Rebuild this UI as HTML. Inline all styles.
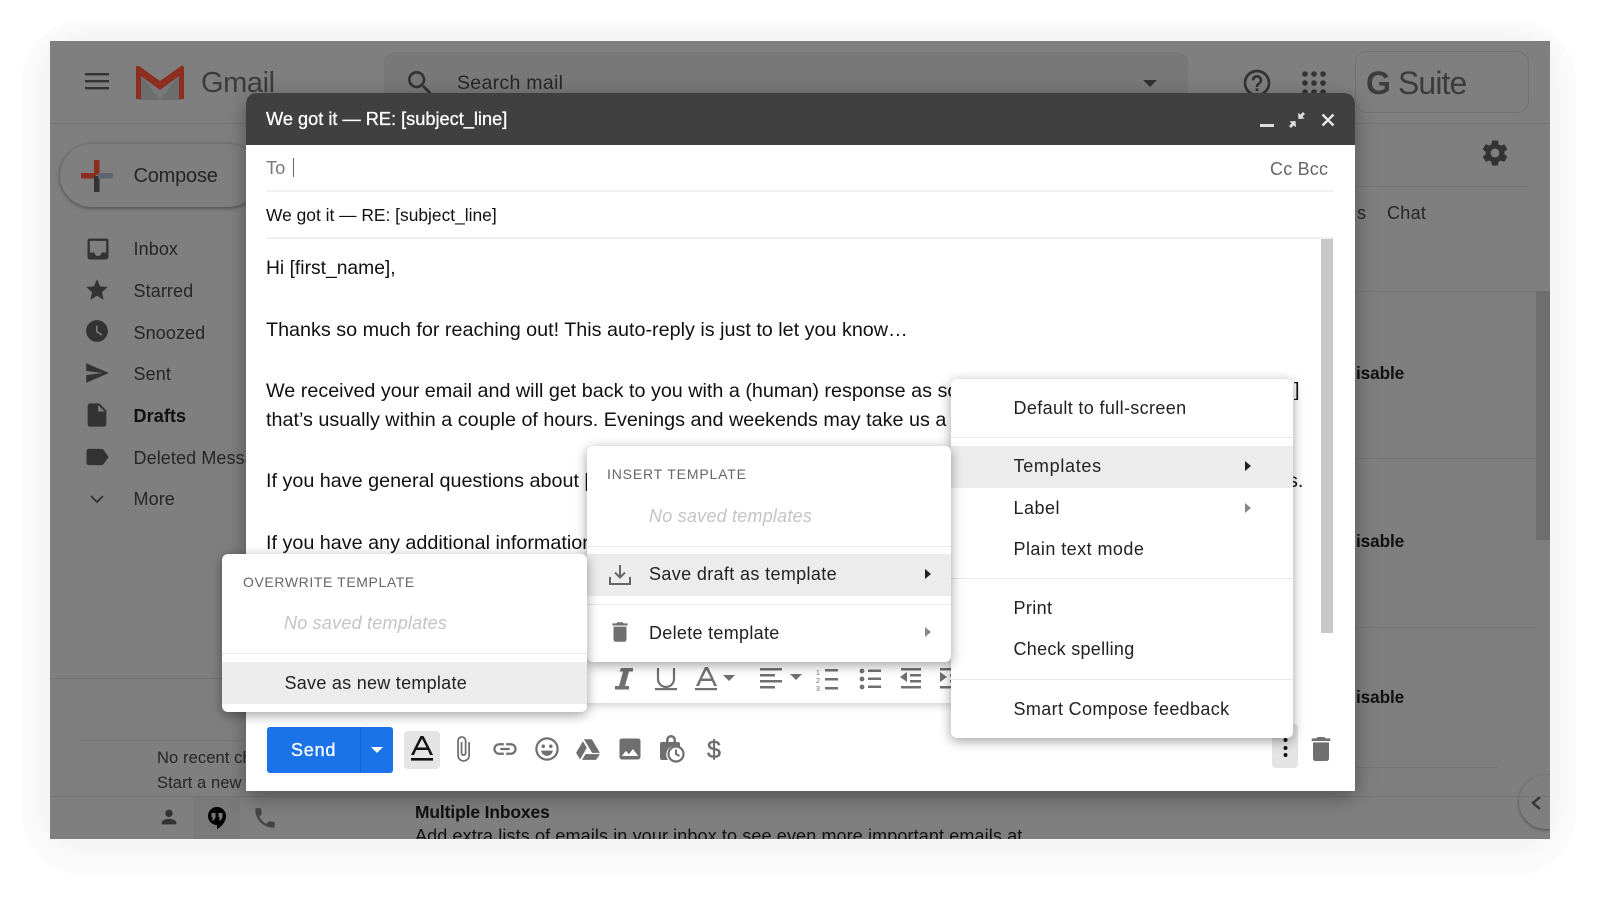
<!DOCTYPE html>
<html><head><meta charset="utf-8"><style>
html,body{margin:0;padding:0;width:1600px;height:897px;overflow:hidden;background:#fff}
body{position:relative;font-family:"Liberation Sans",Arial,sans-serif}
.a,.t,svg{position:absolute}
.t{white-space:nowrap;line-height:22px;margin-top:-11px}
#halo1{left:22px;top:20px;width:1554px;height:855px;border-radius:62px;background:#fbfbfb}
#halo2{left:36px;top:30px;width:1526px;height:824px;border-radius:50px;background:#f5f5f5;filter:blur(4px)}
#bg{left:50px;top:41px;width:1500px;height:798px;background:#7f7f7f;overflow:hidden}
#bg>*{position:absolute}
#bg .t{color:#262626;font-size:18px;letter-spacing:.1px}
.ln{background:#747474;height:1px}
#win{left:246px;top:93px;width:1109px;height:698px;background:#fff;border-radius:10px 10px 0 0;box-shadow:0 6px 20px rgba(0,0,0,.35)}
#hdr{position:absolute;left:0;top:0;width:100%;height:52px;background:#404040;border-radius:10px 10px 0 0}
.b{font-size:19.75px;color:#111;left:20px}
.d{position:absolute;height:2px;background:#f1f1f1}
.menu{position:absolute;background:#fff;border-radius:6px;box-shadow:0 3px 12px rgba(0,0,0,.38)}
.menu .t{font-size:18px;letter-spacing:.36px;color:#222}
.hl{position:absolute;left:0;right:0;background:#ececec}
.dv{position:absolute;left:0;right:0;height:1px;background:#e8e8e8}
.h{font-size:14px!important;color:#666!important}
.ns{font-style:italic;color:#c4c4c4!important;letter-spacing:.22px!important}
.arr{position:absolute;width:0;height:0;border-left:6px solid #222;border-top:5.5px solid transparent;border-bottom:5.5px solid transparent}
.arr.g{border-left-color:#888}
.ic{fill:#6f6f6f}
.bd{font-weight:bold;color:#111!important;letter-spacing:-.1px!important;font-size:17.2px!important}
</style></head><body>
<div class="a" id="halo1"></div><div class="a" id="halo2"></div>
<div class="a" id="bg">
 <div class="ln" style="left:0;top:82px;width:1500px"></div>
 <svg style="left:35px;top:31px" width="24" height="18"><path d="M0 1h24v2.400H0zM0 8h24v2.400H0zM0 15h24v2.400H0z" fill="#333"/></svg>
 <svg style="left:85px;top:24px" width="50" height="36" viewBox="0 0 50 36"><path d="M3 6L25 22 47 6V35H3z" fill="#6d6d6d"/><path d="M3 6L25 22 47 6 25 35z" fill="#7a7a7a" opacity=".8"/><path d="M2 1C1 1 1 2 1 3V34h5V11L25 25 44 11V34h5V3C49 1 48 0 46 1L25 16 4 1z" fill="#8c2f20"/></svg>
 <div class="t" style="left:151px;top:42px;letter-spacing:-.4px;color:#3c3c3c;line-height:34px;margin-top:-17px"><span style="font-size:29px">Gmail</span></div>
 <div style="left:334px;top:11px;width:804px;height:70px;border-radius:11px;background:#787878"></div>
 <svg style="left:354px;top:26px" width="32" height="32" viewBox="0 0 24 24"><path fill="#333" d="M15.500 14h-.79l-.28-.27C15.410 12.590 16 11.110 16 9.500 16 5.910 13.090 3 9.500 3S3 5.910 3 9.500 5.910 16 9.500 16c1.610 0 3.090-.59 4.230-1.570l.27.28v.79l5 4.990L20.490 19l-4.990-5zm-6 0C7.010 14 5 11.990 5 9.500S7.010 5 9.500 5 14 7.010 14 9.500 11.990 14 9.500 14z"/></svg>
 <div class="t" style="left:407px;top:42px;letter-spacing:.3px"><span style="font-size:19.500px">Search mail</span></div>
 <div style="left:1093px;top:39px;width:0;height:0;border-left:7px solid transparent;border-right:7px solid transparent;border-top:7px solid #333"></div>
 <svg style="left:1191px;top:26px" width="32" height="32" viewBox="0 0 24 24"><path fill="#333" d="M11 18h2v-2h-2v2zm1-16C6.480 2 2 6.480 2 12s4.480 10 10 10 10-4.480 10-10S17.520 2 12 2zm0 18c-4.410 0-8-3.590-8-8s3.590-8 8-8 8 3.590 8 8-3.590 8-8 8zm0-14c-2.210 0-4 1.790-4 4h2c0-1.100.9-2 2-2s2 .9 2 2c0 2-3 1.750-3 5h2c0-2.250 3-2.500 3-5 0-2.210-1.790-4-4-4z"/></svg>
 <svg style="left:1252px;top:30px" width="24" height="24" fill="#333"><circle cx="3" cy="3" r="2.800"/><circle cx="12" cy="3" r="2.800"/><circle cx="21" cy="3" r="2.800"/><circle cx="3" cy="12" r="2.800"/><circle cx="12" cy="12" r="2.800"/><circle cx="21" cy="12" r="2.800"/><circle cx="3" cy="21" r="2.800"/><circle cx="12" cy="21" r="2.800"/><circle cx="21" cy="21" r="2.800"/></svg>
 <div style="left:1305px;top:10px;width:174px;height:62px;border:1px solid #727272;border-radius:12px;box-sizing:border-box"></div>
 <div class="t" style="left:1316px;top:42px;line-height:38px;margin-top:-19px;letter-spacing:-.9px;color:#3c3c3c"><span style="font-size:32px;font-weight:bold">G</span><span style="font-size:32px"> Suite</span></div>
 <svg style="left:1430px;top:97px" width="30" height="30" viewBox="0 0 24 24"><path fill="#333" d="M19.430 12.980c.04-.32.07-.64.07-.98s-.03-.66-.07-.98l2.110-1.650c.19-.15.24-.42.12-.64l-2-3.460c-.12-.22-.39-.3-.61-.22l-2.490 1c-.52-.4-1.080-.73-1.690-.98l-.38-2.650C14.460 2.180 14.250 2 14 2h-4c-.25 0-.46.18-.49.42l-.38 2.650c-.61.25-1.170.59-1.690.98l-2.490-1c-.23-.09-.49 0-.61.22l-2 3.460c-.13.22-.07.49.12.64l2.110 1.650c-.04.32-.07.65-.07.98s.03.66.07.98l-2.110 1.650c-.19.15-.24.42-.12.64l2 3.460c.12.22.39.3.61.22l2.490-1c.52.4 1.080.73 1.690.98l.38 2.650c.03.24.24.42.49.42h4c.25 0 .46-.18.49-.42l.38-2.650c.61-.25 1.170-.59 1.690-.98l2.490 1c.23.09.49 0 .61-.22l2-3.460c.12-.22.07-.49-.12-.64l-2.110-1.650zM12 15.500c-1.930 0-3.500-1.570-3.500-3.500s1.570-3.500 3.500-3.500 3.500 1.570 3.500 3.500-1.570 3.500-3.500 3.500z"/></svg>
 <div class="ln" style="left:1305px;top:145px;width:174px"></div>
 <div class="t" style="left:1307px;top:172px">s</div><div class="t" style="left:1337px;top:172px;letter-spacing:.3px">Chat</div>
 <div style="left:1486px;top:250px;width:14px;height:249px;background:#6e6e6e"></div>
 <div class="ln" style="left:1305px;top:250px;width:180px"></div><div class="ln" style="left:1305px;top:417px;width:180px"></div><div class="ln" style="left:1305px;top:586px;width:180px"></div><div class="ln" style="left:1305px;top:726px;width:143px"></div>
 <div class="t bd" style="left:1306px;top:332px">isable</div>
 <div class="t bd" style="left:1306px;top:500px">isable</div>
 <div class="t bd" style="left:1306px;top:656px">isable</div>
 <div style="left:1469px;top:734px;width:54px;height:54px;border-radius:50%;background:#7f7f7f;box-shadow:0 1px 3px rgba(0,0,0,.4)"></div>
 <svg style="left:1480px;top:754px" width="14" height="16" fill="none" stroke="#333" stroke-width="2.400"><path d="M10 2L3 8l7 6"/></svg>
 <div style="left:10px;top:103px;width:200px;height:63px;border-radius:32px;background:#7f7f7f;box-shadow:0 1px 4px rgba(0,0,0,.45)"></div>
 <svg style="left:31px;top:119px" width="32" height="32"><rect x="13" y="0" width="5.500" height="15" fill="#8c2f20"/><rect x="0" y="13" width="15" height="5.500" fill="#8c2f20"/><rect x="13" y="16" width="5.500" height="16" fill="#333"/><rect x="17" y="13" width="15" height="5.500" fill="#5d6670"/></svg>
 <div class="t" style="left:83.500px;top:135px;letter-spacing:-.2px"><span style="font-size:20px">Compose</span></div>
 <svg style="left:34px;top:194px" width="28" height="28" viewBox="0 0 24 24"><path fill="#333" d="M19 3H5c-1.100 0-2 .9-2 2v14c0 1.100.9 2 2 2h14c1.100 0 2-.9 2-2V5c0-1.100-.9-2-2-2zm0 12h-4c0 1.660-1.340 3-3 3s-3-1.340-3-3H5V5h14v10z"/></svg>
 <svg style="left:34px;top:236px" width="26" height="26" viewBox="0 0 24 24"><path fill="#333" d="M12 17.270L18.180 21l-1.640-7.030L22 9.240l-7.190-.61L12 2 9.190 8.630 2 9.240l5.460 4.730L5.820 21z"/></svg>
 <svg style="left:34px;top:277px" width="26" height="26" viewBox="0 0 24 24"><path fill="#333" d="M11.990 2C6.470 2 2 6.480 2 12s4.470 10 9.990 10C17.520 22 22 17.520 22 12S17.520 2 11.990 2zm4.240 14.240L11 13V7h1.500v5.200l4.500 2.700z"/></svg>
 <svg style="left:34px;top:319px" width="26" height="26" viewBox="0 0 24 24"><path fill="#333" d="M2 21l21-9L2 3v7l15 2-15 2z"/></svg>
 <svg style="left:33px;top:360px" width="28" height="28" viewBox="0 0 24 24"><path fill="#333" d="M14 2H6c-1.100 0-2 .9-2 2v16c0 1.100.9 2 2 2h12c1.100 0 2-.9 2-2V8l-6-6zm-1 7V3.500L18.500 9H13z"/></svg>
 <svg style="left:33px;top:402px" width="28" height="28" viewBox="0 0 24 24"><path fill="#333" d="M17.630 5.840C17.270 5.330 16.670 5 16 5L5 5.010C3.900 5.010 3 5.900 3 7v10c0 1.100.9 1.990 2 1.990L16 19c.67 0 1.270-.33 1.630-.84L22 12l-4.370-6.160z"/></svg>
 <svg style="left:40px;top:454px" width="14" height="9" fill="none" stroke="#333" stroke-width="1.800"><path d="M1 1l6 6 6-6"/></svg>
 <div class="t" style="left:83.500px;top:208px">Inbox</div>
 <div class="t" style="left:83.500px;top:250px">Starred</div>
 <div class="t" style="left:83.500px;top:291.500px">Snoozed</div>
 <div class="t" style="left:83.500px;top:333px">Sent</div>
 <div class="t" style="left:83.500px;top:375px;font-weight:bold;color:#111">Drafts</div>
 <div class="t" style="left:83.500px;top:416.500px">Deleted Messages</div>
 <div class="t" style="left:83.500px;top:458px">More</div>
 <div class="ln" style="left:0;top:637px;width:200px"></div>
 <div class="ln" style="left:30px;top:699px;width:180px"></div>
 <div class="ln" style="left:0;top:755px;width:1500px"></div>
 <div class="t" style="left:107px;top:715.500px"><span style="font-size:16.500px">No recent chats</span></div>
 <div class="t" style="left:107px;top:741px"><span style="font-size:16.500px">Start a new one</span></div>
 <div style="left:143px;top:756px;width:47px;height:42px;background:#7a7a7a"></div>
 <svg style="left:108px;top:765px" width="22" height="22" viewBox="0 0 24 24"><path fill="#333" d="M12 12c2.210 0 4-1.790 4-4s-1.790-4-4-4-4 1.790-4 4 1.790 4 4 4zm0 2c-2.670 0-8 1.340-8 4v2h16v-2c0-2.660-5.330-4-8-4z"/></svg>
 <svg style="left:155px;top:764px" width="24" height="26" viewBox="0 0 24 26"><path fill="#000" d="M12 2a9 9 0 0 0-9 9c0 5 4 9 9 9v4c4-2 9-7 9-13a9 9 0 0 0-9-9z"/><path fill="#7a7a7a" d="M6.500 8h4v4.500l-2 3H7l1-3H6.500zM13.500 8h4v4.500l-2 3H14l1-3h-1.500z"/></svg>
 <svg style="left:202px;top:764px" width="26" height="26" viewBox="0 0 24 24"><path fill="#444" d="M6.620 10.790c1.440 2.830 3.760 5.140 6.590 6.590l2.200-2.200c.27-.27.67-.36 1.020-.24 1.120.37 2.330.57 3.570.57.55 0 1 .45 1 1V20c0 .55-.45 1-1 1-9.390 0-17-7.610-17-17 0-.55.45-1 1-1h3.500c.55 0 1 .45 1 1 0 1.250.2 2.450.57 3.570.11.35.03.74-.25 1.020l-2.200 2.200z"/></svg>
 <div class="t bd" style="left:365px;top:771px;font-size:17.400px!important">Multiple Inboxes</div>
 <div class="t" style="left:365px;top:795px;color:#111;letter-spacing:.12px">Add extra lists of emails in your inbox to see even more important emails at</div>
</div>

<div class="a" id="win">
 <div id="hdr">
  <div class="t" style="left:20px;top:26px;color:#fff;font-size:18.200px;-webkit-text-stroke:.3px #fff">We got it — RE: [subject_line]</div>
  <div class="a" style="left:1014px;top:31px;width:14px;height:2.500px;background:#ddd"></div>
  <svg style="left:1043px;top:19px" width="16" height="16" fill="#ddd"><path d="M9 1l.5 6 6-.5-2-2L16 2 14 0l-2.500 2.500zM7 15l-.5-6-6 .5 2 2L0 14l2 2 2.500-2.500z"/></svg>
  <svg style="left:1075px;top:20px" width="14" height="14" stroke="#e4e4e4" stroke-width="2.400"><path d="M1.500 1.500l11 11M12.500 1.500l-11 11"/></svg>
 </div>
 <div class="t" style="left:20px;top:75px;font-size:18.300px;color:#777">To</div>
 <div class="a" style="left:47px;top:65px;width:1px;height:19px;background:#666"></div>
 <div class="t" style="left:1024px;top:76px;font-size:18px;color:#666;letter-spacing:.2px">Cc Bcc</div>
 <div class="d" style="left:20px;top:97px;width:1068px"></div>
 <div class="t b" style="top:122px;font-size:17.400px">We got it — RE: [subject_line]</div>
 <div class="d" style="left:20px;top:144px;width:1068px"></div>
 <div class="a" style="left:1075px;top:146px;width:12px;height:394px;background:#c8c8c8"></div>
 <div class="t b" style="top:176px;font-size:19.300px">Hi [first_name],</div>
 <div class="t b" style="top:237px">Thanks so much for reaching out! This auto-reply is just to let you know…</div>
 <div class="t b" style="top:297.500px">We received your email and will get back to you with a (human) response as soon as possible</div>
 <div class="t b" style="top:297px;left:1048px">]</div>
 <div class="t b" style="top:327px">that’s usually within a couple of hours. Evenings and weekends may take us a little longer</div>
 <div class="t b" style="top:388px">If you have general questions about [company_name], check out our help center</div>
 <div class="t b" style="top:388px;left:1042px">s.</div>
 <div class="t b" style="top:450px">If you have any additional information to share, just reply to this message</div>

 <div class="a" style="left:340px;top:556px;width:400px;height:54px;background:#fff;box-shadow:0 2px 8px rgba(0,0,0,.2)"></div>
 <svg style="left:366px;top:574px" width="24" height="24"><path d="M9 1h12v3.500h-4L13 19h4v3.500H3V19h4L11 4.500H7.500z" fill="#707070"/></svg>
 <svg style="left:407px;top:574px" width="26" height="24" fill="none" stroke="#707070" stroke-width="2.200"><path d="M5 1v11a8 8 0 0 0 16 0V1"/><rect x="2" y="21" width="22" height="2.200" fill="#707070" stroke="none"/></svg>
 <svg style="left:447px;top:574px" width="26" height="24" fill="#707070"><path d="M12 0h3l9 19h-3l-2-5H8l-2 5H3zm-3 11.500h9L13.500 3z"/><rect x="2" y="21" width="22" height="2.200"/></svg>
 <svg style="left:477px;top:582px" width="12" height="7" fill="#707070"><path d="M0 0h12L6 6z"/></svg>
 <svg style="left:514px;top:575px" width="44" height="22" fill="#707070"><path d="M0 0h22v2.500H0zM0 6h15v2.500H0zM0 12h22v2.500H0zM0 18h15v2.500H0zM30 6h12l-6 6z"/></svg>
 <svg style="left:569px;top:575px" width="24" height="24" fill="#707070"><path d="M10 1h13v2.500H10zM10 10h13v2.500H10zM10 19h13v2.500H10z"/><text x="1" y="7" font-size="7" font-family="Liberation Sans">1</text><text x="1" y="15" font-size="7" font-family="Liberation Sans">2</text><text x="1" y="23" font-size="7" font-family="Liberation Sans">3</text></svg>
 <svg style="left:613px;top:575px" width="24" height="24" fill="#707070"><circle cx="3" cy="3" r="2.400"/><circle cx="3" cy="11" r="2.400"/><circle cx="3" cy="19" r="2.400"/><path d="M9 1.500h13V4H9zM9 9.500h13V12H9zM9 17.500h13V20H9z"/></svg>
 <svg style="left:653px;top:575px" width="24" height="24" fill="#707070"><path d="M2 0h20v2.500H2zM2 18h20v2.500H2zM11 6h11v2.500H11zM11 12h11v2.500H11zM8 4v10l-7-5z"/></svg>
 <svg style="left:694px;top:575px" width="18" height="24" fill="#707070"><path d="M0 0h18v2.500H0zM0 18h18v2.500H0zM0 4v10l7-5zM10 6h8v2.500h-8zM10 12h8v2.500h-8z"/></svg>

 <div class="a" style="left:21px;top:634px;width:126px;height:46px;background:#1a73e8;border-radius:3px"></div>
 <div class="a" style="left:114px;top:634px;width:1px;height:46px;background:#1765cc"></div>
 <div class="t" style="left:45px;top:657px;color:#fff;font-size:18px;letter-spacing:.8px;-webkit-text-stroke:.3px #fff">Send</div>
 <svg style="left:125px;top:654px" width="12" height="7" fill="#fff"><path d="M0 0h12L6 6z"/></svg>
 <div class="a" style="left:158px;top:638px;width:36px;height:38px;background:#e4e4e4;border-radius:4px"></div>
 <svg style="left:164px;top:643px" width="24" height="26"><path d="M10.500 0h3L23 19h-3l-2.200-5H6.200L4 19H1zM7.400 11.500h9.200L12 2.800z" fill="#111"/><rect x="1" y="22" width="22" height="2.600" fill="#111"/></svg>
 <svg style="left:203px;top:641px" width="28" height="30" viewBox="0 0 24 24"><path class="ic" d="M16.500 6v11.500c0 2.210-1.790 4-4 4s-4-1.790-4-4V5c0-1.380 1.120-2.500 2.500-2.500s2.500 1.120 2.500 2.500v10.500c0 .55-.45 1-1 1s-1-.45-1-1V6H10v9.500c0 1.380 1.120 2.500 2.500 2.500s2.500-1.120 2.500-2.500V5c0-2.210-1.790-4-4-4S7 2.790 7 5v12.500c0 3.040 2.460 5.500 5.500 5.500s5.500-2.460 5.500-5.500V6h-1.500z"/></svg>
 <svg style="left:245px;top:642px" width="28" height="28" viewBox="0 0 24 24"><path class="ic" d="M3.900 12c0-1.710 1.390-3.100 3.100-3.100h4V7H7c-2.760 0-5 2.240-5 5s2.240 5 5 5h4v-1.900H7c-1.710 0-3.100-1.390-3.100-3.100zM8 13h8v-2H8v2zm9-6h-4v1.900h4c1.710 0 3.100 1.390 3.100 3.100s-1.390 3.100-3.100 3.100h-4V17h4c2.760 0 5-2.240 5-5s-2.240-5-5-5z"/></svg>
 <svg style="left:288px;top:643px" width="26" height="26" viewBox="0 0 24 24"><circle cx="12" cy="12" r="9.800" fill="none" stroke="#6f6f6f" stroke-width="2"/><circle cx="8.500" cy="9.500" r="1.600" class="ic"/><circle cx="15.500" cy="9.500" r="1.600" class="ic"/><path class="ic" d="M6.500 13.500h11c-.6 3-3 4.800-5.500 4.800s-4.900-1.800-5.500-4.800z"/></svg>
 <svg style="left:329px;top:643px" width="26" height="26" viewBox="0 0 24 24"><path class="ic" d="M8.300 3h7.300l7.400 12.600h-7.200zM7.300 4.800l3.600 6.200-6.300 10.600L1 15.500zM9.700 16.700H23l-3.600 5.300H6.500z"/></svg>
 <svg style="left:370px;top:642px" width="28" height="28" viewBox="0 0 24 24"><path class="ic" d="M21 19V5c0-1.100-.9-2-2-2H5c-1.100 0-2 .9-2 2v14c0 1.100.9 2 2 2h14c1.100 0 2-.9 2-2zM8.500 13.500l2.500 3.010L14.500 12l4.500 6H5l3.500-4.500z"/></svg>
 <svg style="left:413px;top:641px" width="26" height="30" viewBox="0 0 26 30"><path class="ic" d="M7 8V6a5 5 0 0 1 10 0v2h2a2 2 0 0 1 2 2v3a9 9 0 0 0-12 13H3a2 2 0 0 1-2-2V10a2 2 0 0 1 2-2zm2.500 0h5V6a2.500 2.500 0 0 0-5 0z"/><circle cx="17" cy="20" r="7.500" fill="#fff" stroke="#6f6f6f" stroke-width="2.200"/><path d="M17 15.500V20l3.500 2" fill="none" stroke="#6f6f6f" stroke-width="2"/></svg>
 <div class="t" style="left:461px;top:657px;font-size:25px;color:#6f6f6f;line-height:28px;margin-top:-14px;-webkit-text-stroke:.5px #6f6f6f">$</div>

 <div class="a" style="left:1026px;top:631px;width:26px;height:44px;background:#e4e4e4;border-radius:4px"></div>
 <svg style="left:1037px;top:643px" width="5" height="24" fill="#111"><circle cx="2.500" cy="4" r="2"/><circle cx="2.500" cy="12" r="2"/><circle cx="2.500" cy="19" r="2"/></svg>
 <svg style="left:1059px;top:640px" width="32" height="32" viewBox="0 0 24 24"><path class="ic" d="M6 19c0 1.100.9 2 2 2h8c1.100 0 2-.9 2-2V7H6v12zM19 4h-3.500l-1-1h-5l-1 1H5v2h14V4z"/></svg>

 <div class="menu" style="left:705px;top:286px;width:342px;height:359px">
  <div class="t" style="left:62.500px;top:29px">Default to full-screen</div>
  <div class="dv" style="top:58px"></div>
  <div class="hl" style="top:67px;height:42px"></div>
  <div class="t" style="left:62.500px;top:87px;letter-spacing:.7px">Templates</div><div class="arr" style="left:294px;top:82px"></div>
  <div class="t" style="left:62.500px;top:128.500px;letter-spacing:.5px">Label</div><div class="arr g" style="left:294px;top:124px"></div>
  <div class="t" style="left:62.500px;top:170px;letter-spacing:.45px">Plain text mode</div>
  <div class="dv" style="top:199px"></div>
  <div class="t" style="left:62.500px;top:228.500px">Print</div>
  <div class="t" style="left:62.500px;top:270px;letter-spacing:.28px">Check spelling</div>
  <div class="dv" style="top:300px"></div>
  <div class="t" style="left:62.500px;top:329.500px">Smart Compose feedback</div>
 </div>
 <div class="menu" style="left:341px;top:353px;width:364px;height:216px">
  <div class="t h" style="left:20px;top:28px;letter-spacing:.83px">INSERT TEMPLATE</div>
  <div class="t ns" style="left:62px;top:70px">No saved templates</div>
  <div class="dv" style="top:100px"></div>
  <div class="hl" style="top:108px;height:42px"></div>
  <svg style="left:22px;top:118px" width="22" height="22" fill="none" stroke="#666" stroke-width="2"><path d="M11 1v12M6 8.500l5 5 5-5M1 13v7h20v-7"/></svg>
  <div class="t" style="left:62px;top:128px">Save draft as template</div><div class="arr" style="left:338px;top:123px"></div>
  <div class="dv" style="top:158px"></div>
  <svg style="left:20px;top:173px" width="26" height="26" viewBox="0 0 24 24"><path class="ic" d="M6 19c0 1.100.9 2 2 2h8c1.100 0 2-.9 2-2V7H6v12zM19 4h-3.500l-1-1h-5l-1 1H5v2h14V4z"/></svg>
  <div class="t" style="left:62px;top:186.500px;letter-spacing:.3px">Delete template</div><div class="arr g" style="left:338px;top:181px"></div>
 </div>
 <div class="menu" style="left:-24px;top:461px;width:365px;height:158px">
  <div class="t h" style="left:21px;top:28px;letter-spacing:.6px">OVERWRITE TEMPLATE</div>
  <div class="t ns" style="left:62px;top:69px">No saved templates</div>
  <div class="dv" style="top:99px"></div>
  <div class="hl" style="top:108px;height:42px"></div>
  <div class="t" style="left:62.500px;top:129px;letter-spacing:.27px">Save as new template</div>
 </div>
</div>
</body></html>
